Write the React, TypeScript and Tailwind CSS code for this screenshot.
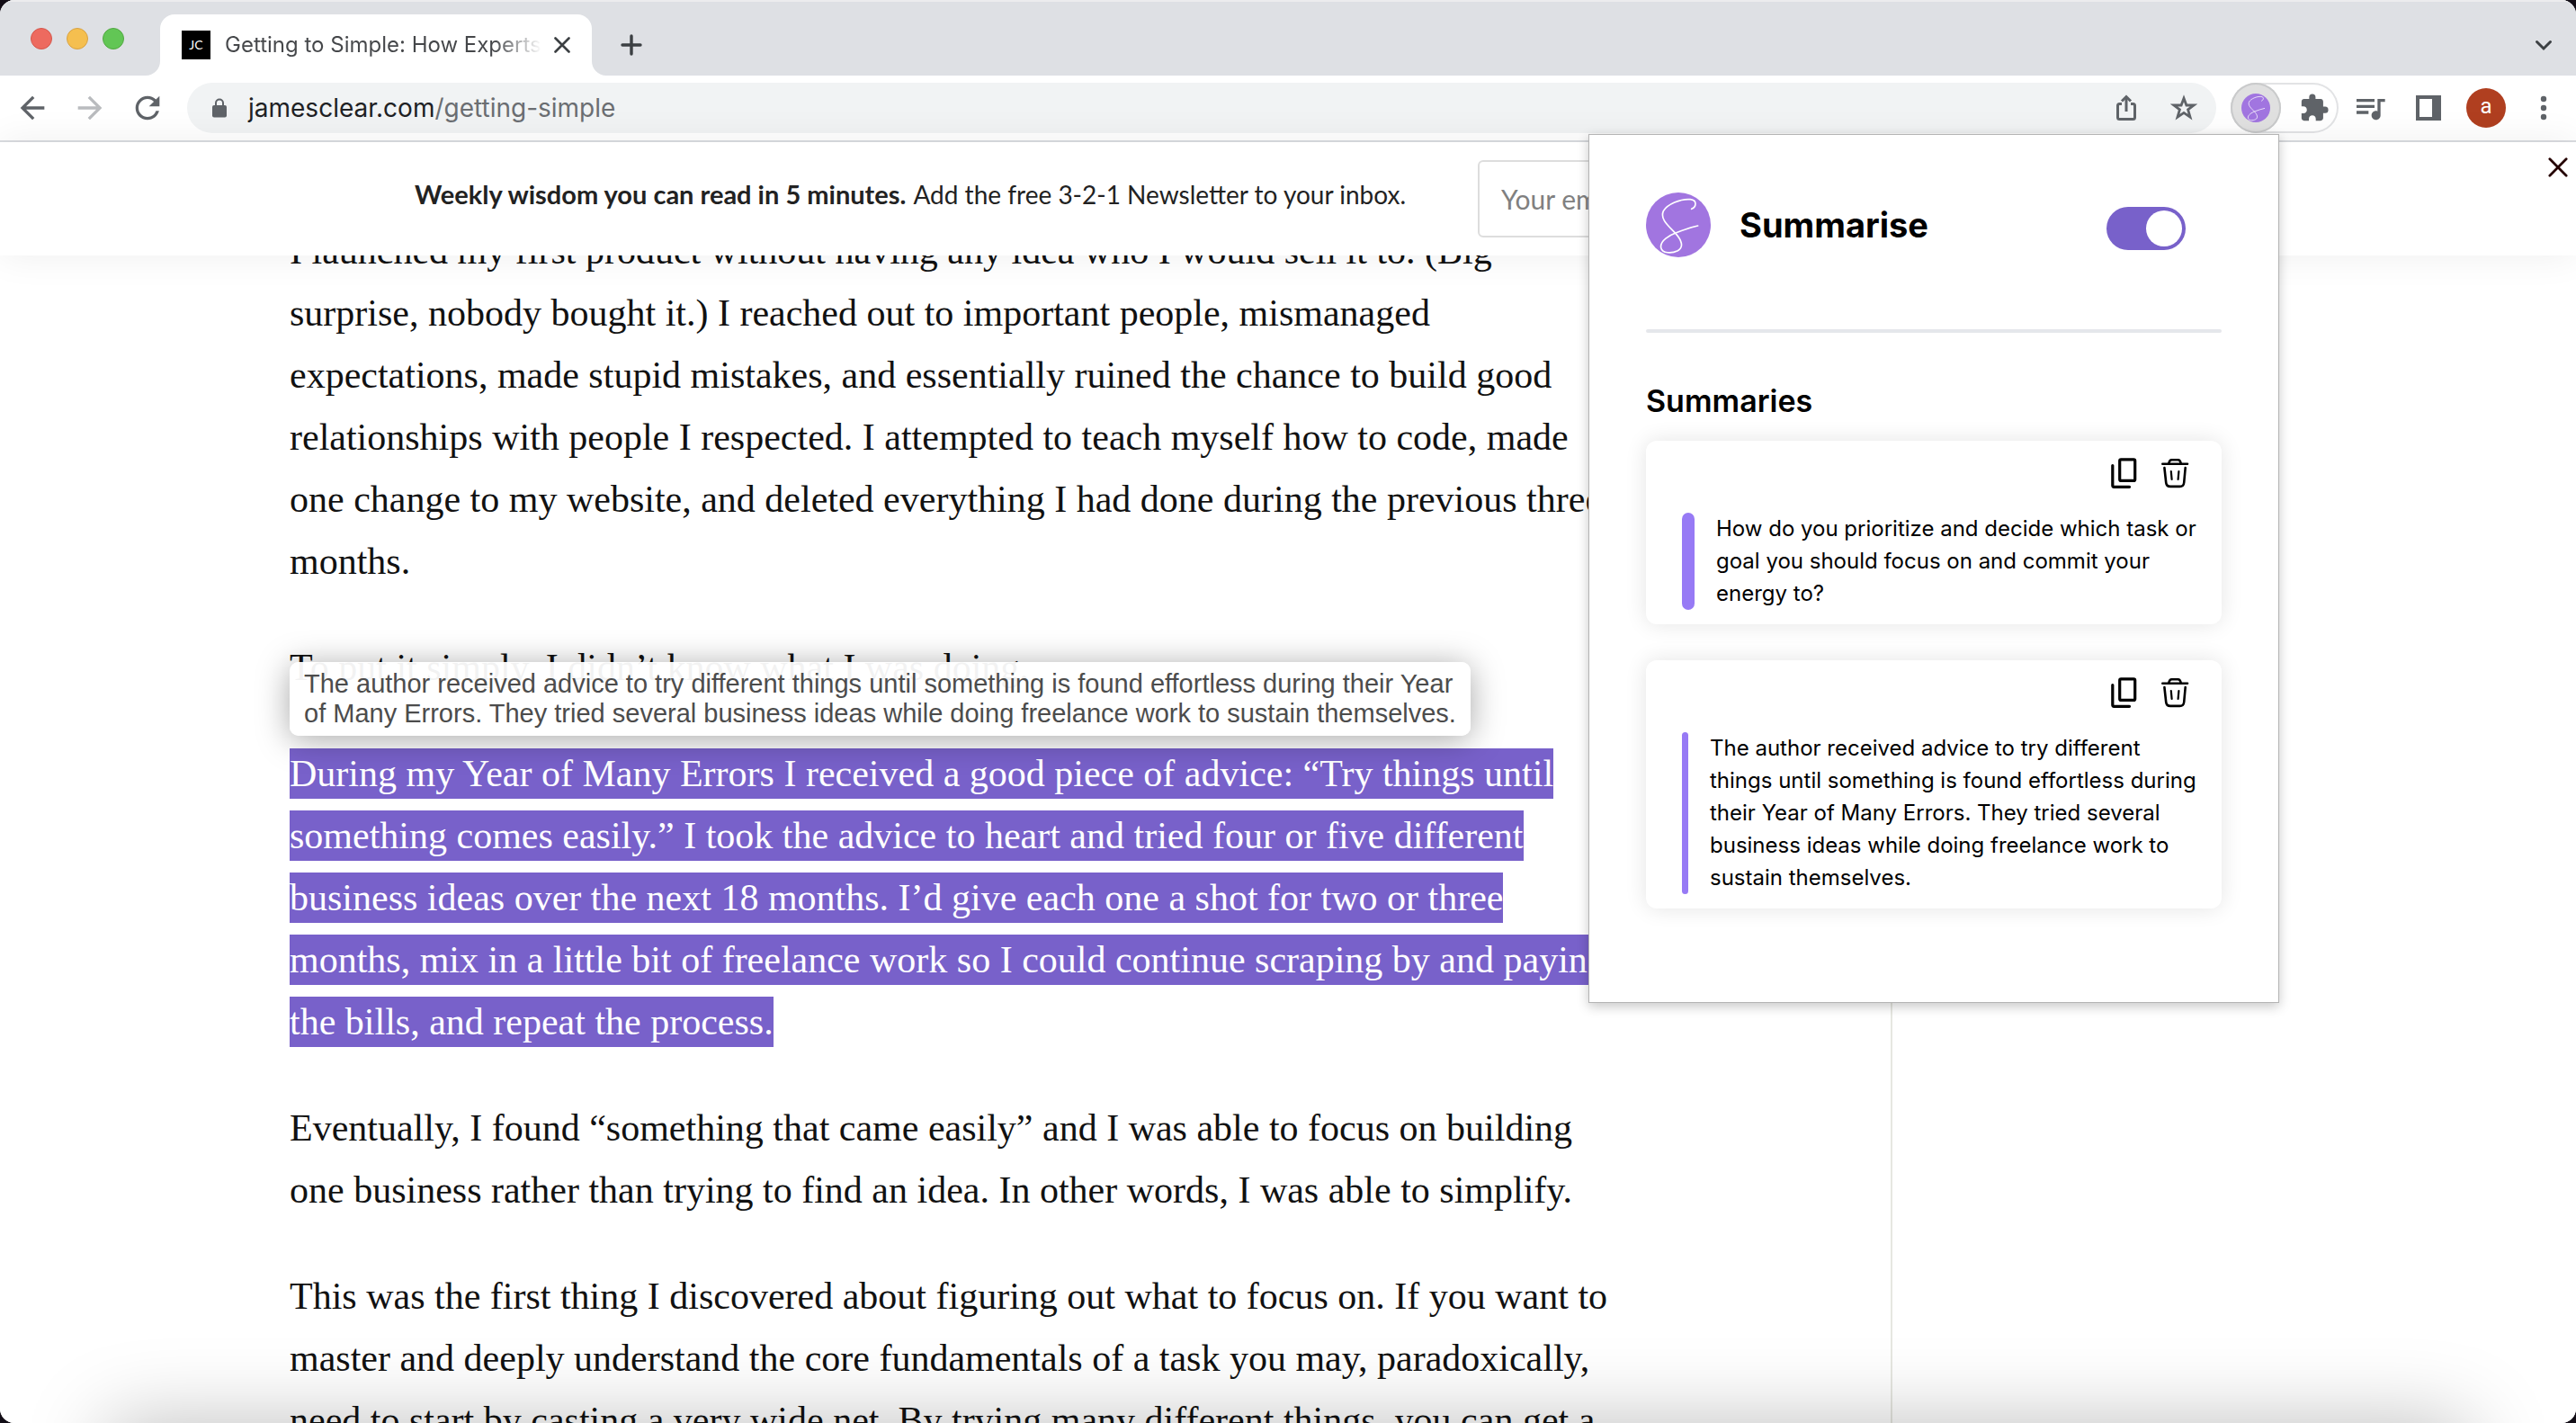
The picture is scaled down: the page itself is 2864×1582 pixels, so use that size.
import { useState, type ReactNode } from "react";
import {
  MdArrowBack,
  MdArrowForward,
  MdExtension,
  MdQueueMusic,
  MdRefresh,
} from "react-icons/md";

const HIGHLIGHTED = [
  "During my Year of Many Errors I received a good piece of advice: “Try things until",
  "something comes easily.” I took the advice to heart and tried four or five different",
  "business ideas over the next 18 months. I’d give each one a shot for two or three",
  "months, mix in a little bit of freelance work so I could continue scraping by and paying",
  "the bills, and repeat the process.",
];

const OPENING = [
  "I launched my first product without having any idea who I would sell it to. (Big",
  "surprise, nobody bought it.) I reached out to important people, mismanaged",
  "expectations, made stupid mistakes, and essentially ruined the chance to build good",
  "relationships with people I respected. I attempted to teach myself how to code, made",
  "one change to my website, and deleted everything I had done during the previous three",
  "months.",
];

const EVENTUALLY = [
  "Eventually, I found “something that came easily” and I was able to focus on building",
  "one business rather than trying to find an idea. In other words, I was able to simplify.",
];

const DISCOVERY = [
  "This was the first thing I discovered about figuring out what to focus on. If you want to",
  "master and deeply understand the core fundamentals of a task you may, paradoxically,",
  "need to start by casting a very wide net. By trying many different things, you can get a",
];

const SUMMARIES = [
  {
    text: "How do you prioritize and decide which task or goal you should focus on and commit your energy to?",
    bar: "w-[14px]",
  },
  {
    text: "The author received advice to try different things until something is found effortless during their Year of Many Errors. They tried several business ideas while doing freelance work to sustain themselves.",
    bar: "w-[7px]",
  },
];

function LogoMark({ className }: { className: string }) {
  return (
    <svg viewBox="0 0 216 216" className={className} aria-hidden="true">
      <circle cx="108" cy="108" r="108" fill="#a175e0" />
      <path
        d="M152 55C168 48 172 26 148 23C115 20 70 40 58 62C46 90 76 112 99 137C118 158 128 182 106 194C86 204 54 204 50 184C46 160 80 142 99 135C124 125 150 116 173 111"
        fill="none"
        stroke="#fff"
        strokeWidth="5"
        strokeLinecap="round"
      />
    </svg>
  );
}

function Cross({ className, width }: { className: string; width: number }) {
  return (
    <svg viewBox="0 0 24 24" className={className} fill="none" stroke="currentColor" strokeWidth={width} strokeLinecap="round" aria-hidden="true">
      <path d="M2 2L22 22M22 2L2 22" />
    </svg>
  );
}

function LockIcon() {
  return (
    <svg viewBox="0 0 24 24" className="size-6" aria-hidden="true">
      <rect x="4" y="9" width="16" height="13.500" rx="2" fill="currentColor" />
      <path d="M8 10V6.500A4 4 0 0 1 16 6.500V10" fill="none" stroke="currentColor" strokeWidth="2" />
    </svg>
  );
}

function ShareIcon() {
  return (
    <svg viewBox="0 0 30 30" className="size-[30px]" fill="none" stroke="#5f6368" strokeWidth="3" aria-hidden="true">
      <path d="M10 10.500H7.500Q5.500 10.500 5.500 12.500V25.500Q5.500 27.500 7.500 27.500H22.500Q24.500 27.500 24.500 25.500V12.500Q24.500 10.500 22.500 10.500H20" />
      <path d="M15 19V3" />
      <path d="M10 7.500L15 2.500L20 7.500" />
    </svg>
  );
}

function StarIcon() {
  return (
    <svg viewBox="0 0 30 30" className="size-[30px]" fill="none" stroke="#5f6368" strokeWidth="2.800" aria-hidden="true">
      <path d="M15 4.200L17.900 12H26L19.600 16.900L22 25.200L15 20.400L8 25.200L10.400 16.900L4 12H12.100Z" />
    </svg>
  );
}

function CopyIcon() {
  return (
    <svg viewBox="0 0 40 40" className="size-10" fill="none" stroke="#000" strokeWidth="3.200" strokeLinecap="round" strokeLinejoin="round" aria-hidden="true">
      <rect x="14.700" y="4.800" width="17" height="23.600" rx="1.500" />
      <path d="M6.800 11.500V33.800Q6.800 35.300 8.300 35.300H25.500" />
    </svg>
  );
}

function TrashIcon() {
  return (
    <svg viewBox="0 0 40 40" className="size-10" fill="none" stroke="#000" strokeWidth="2.600" strokeLinecap="round" strokeLinejoin="round" aria-hidden="true">
      <path d="M6.300 9.800H34" />
      <path d="M13.200 9.500Q14 5.200 16.500 5.200H23.500Q26 5.200 26.800 9.500" />
      <path d="M8.400 14L10.200 30.500Q10.700 34.900 15 34.900H25.500Q29.800 34.900 30.200 30.500L31.700 14" />
      <path d="M15.800 18L16.600 27M24.400 18L23.600 27" strokeWidth="2.200" />
    </svg>
  );
}

function Lines({ lines }: { lines: string[] }) {
  return (
    <>
      {lines.map((line) => (
        <span key={line} className="block">
          {line}
        </span>
      ))}
    </>
  );
}

function TabStrip() {
  return (
    <header className="flex h-[84px] shrink-0 items-end border-t-2 border-[#ececee] bg-[#dee0e4] pr-[26px] pl-[34px]">
      <div className="mb-[29px] flex gap-4">
        <button aria-label="Close window" className="size-6 rounded-full border border-[#d5574c] bg-[#ed6a5f]" />
        <button aria-label="Minimise window" className="size-6 rounded-full border border-[#d8a243] bg-[#f5bf4f]" />
        <button aria-label="Zoom window" className="size-6 rounded-full border border-[#52a842] bg-[#62c655]" />
      </div>
      <div className="relative ml-10 flex h-[68px] w-[480px] items-center rounded-t-2xl bg-white pl-6">
        <svg viewBox="0 0 16 16" className="absolute bottom-0 -left-4 size-4" fill="#fff" aria-hidden="true">
          <path d="M16 0V16H0A16 16 0 0 0 16 0Z" />
        </svg>
        <svg viewBox="0 0 16 16" className="absolute -right-4 bottom-0 size-4" fill="#fff" aria-hidden="true">
          <path d="M0 0V16H16A16 16 0 0 1 0 0Z" />
        </svg>
        <span className="flex size-8 items-center justify-center bg-black font-['Lato',sans-serif] text-sm text-white">JC</span>
        <span className="ml-4 w-[352px] overflow-hidden bg-linear-to-r from-[#45474a] from-85% to-transparent bg-clip-text text-2xl whitespace-nowrap text-transparent">
          Getting to Simple: How Experts
        </span>
        <button aria-label="Close tab" className="ml-[14px] text-[#3c4043]">
          <Cross className="size-[18px]" width={3.5} />
        </button>
      </div>
      <button aria-label="New tab" className="mb-[22px] ml-8 text-[#3c4043]">
        <svg viewBox="0 0 24 24" className="size-6" fill="none" stroke="currentColor" strokeWidth="3.400" strokeLinecap="round" aria-hidden="true">
          <path d="M12 2V22M2 12H22" />
        </svg>
      </button>
      <button aria-label="Search tabs" className="mb-6 ml-auto text-[#3c4043]">
        <svg viewBox="0 0 20 20" className="size-5" fill="none" stroke="currentColor" strokeWidth="3" strokeLinecap="round" aria-hidden="true">
          <path d="M2.500 6.500L10 14L17.500 6.500" />
        </svg>
      </button>
    </header>
  );
}

function Toolbar() {
  return (
    <nav className="flex h-[74px] shrink-0 items-center border-b-2 border-[#dadce0] bg-white pr-4 pl-4 text-[#5f6368]">
      <div className="flex gap-6 pr-6">
        <button aria-label="Back">
          <MdArrowBack className="size-10" />
        </button>
        <button aria-label="Forward" className="text-[#b9bbbe]">
          <MdArrowForward className="size-10" />
        </button>
        <button aria-label="Reload">
          <MdRefresh className="size-10" />
        </button>
      </div>
      <div className="flex h-14 flex-1 items-center rounded-full bg-[#f1f3f4] pr-[21px] pl-6">
        <LockIcon />
        <a href="#article" className="ml-5 text-[28px] text-[#6b6e72]">
          <span className="text-[#202124]">jamesclear.com</span>/getting-simple
        </a>
        <button aria-label="Share" className="mr-[34px] ml-auto">
          <ShareIcon />
        </button>
        <button aria-label="Bookmark">
          <StarIcon />
        </button>
      </div>
      <div className="ml-4 flex h-14 w-[120px] items-center rounded-full bg-white inset-ring-2 inset-ring-[#e2e3e5]">
        <button aria-label="Summarise extension" className="flex size-14 items-center justify-center rounded-full bg-[#e0e0e0] inset-ring-2 inset-ring-[#c9cacb]">
          <LogoMark className="size-8" />
        </button>
        <button aria-label="Extensions" className="ml-5">
          <MdExtension className="size-[34px]" />
        </button>
      </div>
      <button aria-label="Media" className="ml-[15px]">
        <MdQueueMusic className="size-10" />
      </button>
      <button aria-label="Side panel" className="ml-[31px]">
        <svg viewBox="0 0 28 28" className="size-7" aria-hidden="true">
          <path d="M0 0H28V28H0ZM4 4V24H18V4Z" fill="currentColor" fillRule="evenodd" />
        </svg>
      </button>
      <button aria-label="Profile" className="ml-7 flex size-11 items-center justify-center rounded-full bg-[#b03f20] pb-1 font-['Roboto',sans-serif] text-2xl text-white">
        a
      </button>
      <button aria-label="Menu" className="ml-[22px]">
        <svg viewBox="0 0 40 40" className="size-10" fill="currentColor" aria-hidden="true">
          <circle cx="20" cy="10" r="3.200" />
          <circle cx="20" cy="20" r="3.200" />
          <circle cx="20" cy="30" r="3.200" />
        </svg>
      </button>
    </nav>
  );
}

function NewsletterBanner() {
  return (
    <section className="relative z-10 flex h-[126px] shrink-0 items-center bg-white pl-[461px] font-['Lato',sans-serif] text-[28px] whitespace-nowrap text-[#222] shadow-[0_0_40px_rgba(0,0,0,0.07)]">
      <p className="shrink-0 basis-[1182px] pb-[10px]">
        <strong className="mr-2 text-[29px] font-bold">Weekly wisdom you can read in 5 minutes.</strong>
        Add the free 3-2-1 Newsletter to your inbox.
      </p>
      <input
        type="email"
        aria-label="Your email address"
        placeholder="Your email address"
        className="h-[86px] w-[520px] rounded-md border-2 border-[#ddd] bg-white px-6 text-[30px] placeholder:text-[#808080]"
      />
      <button aria-label="Dismiss banner" className="absolute top-[17px] right-[9px] text-[#250000]">
        <Cross className="size-[22px]" width={3} />
      </button>
    </section>
  );
}

function Article() {
  return (
    <main id="article" className="-mt-[39px] grid min-h-0 flex-1 grid-cols-[2104fr_760fr] bg-white">
      <article className="flex flex-col gap-[49px] border-r-2 border-[#e6e7e1] pl-[322px] font-['Liberation_Serif',serif] text-[42px] leading-[69px] whitespace-nowrap text-[#111]">
        <p>
          <Lines lines={OPENING} />
        </p>
        <p>To put it simply, I didn’t know what I was doing.</p>
        <div className="relative">
          <p className="text-white">
            {HIGHLIGHTED.map((line) => (
              <span key={line} className="block">
                <mark className="bg-[#7861ca] py-[5px] text-white">{line}</mark>
              </span>
            ))}
          </p>
          <div
            role="tooltip"
            className="absolute bottom-full left-0 mb-2 w-max rounded-[10px] bg-white/95 px-4 py-2 font-['Liberation_Sans',sans-serif] text-[29px] leading-[33px] text-[#4c4c4c] shadow-[0_4px_36px_rgba(0,0,0,0.35)]"
          >
            <Lines
              lines={[
                "The author received advice to try different things until something is found effortless during their Year",
                "of Many Errors. They tried several business ideas while doing freelance work to sustain themselves.",
              ]}
            />
          </div>
        </div>
        <p>
          <Lines lines={EVENTUALLY} />
        </p>
        <p>
          <Lines lines={DISCOVERY} />
        </p>
      </article>
    </main>
  );
}

function IconButton({ label, children }: { label: string; children: ReactNode }) {
  return (
    <button aria-label={label} className="size-10">
      {children}
    </button>
  );
}

function SummaryPopup() {
  const [enabled, setEnabled] = useState(true);
  return (
    <aside className="absolute top-[149px] right-[330px] z-20 w-[768px] border border-[#b4b4b4] bg-white px-[63px] pt-16 pb-[104px] text-black shadow-[0_4px_12px_rgba(0,0,0,0.22)]">
      <div className="flex items-center">
        <LogoMark className="size-[72px]" />
        <h1 className="ml-8 text-[38px] leading-[48px] font-bold">Summarise</h1>
        <label className="mt-2 mr-10 ml-auto flex h-12 w-[88px] cursor-pointer items-center rounded-full bg-[#7861ca] p-1 has-[:not(:checked)]:bg-gray-300">
          <input
            type="checkbox"
            role="switch"
            aria-label="Enable Summarise"
            checked={enabled}
            onChange={(e) => setEnabled(e.target.checked)}
            className="size-10 appearance-none rounded-full bg-white checked:ml-auto"
          />
        </label>
      </div>
      <hr className="mt-20 h-1 rounded-full border-0 bg-gray-200" />
      <h2 className="mt-14 mb-6 text-[34px] leading-[40px] font-semibold">Summaries</h2>
      <ul className="flex flex-col gap-10">
        {SUMMARIES.map(({ text, bar }) => (
          <li key={text} className="rounded-xl bg-white pr-6 pb-4 pl-10 shadow-[0_0_24px_rgba(0,0,0,0.11)]">
            <div className="mb-2 flex h-[72px] items-center justify-end gap-4 pr-2">
              <IconButton label="Copy summary">
                <CopyIcon />
              </IconButton>
              <IconButton label="Delete summary">
                <TrashIcon />
              </IconButton>
            </div>
            <div className="flex gap-6">
              <span className={`${bar} shrink-0 rounded-full bg-[#977af5]`} />
              <p className="text-2xl leading-9">{text}</p>
            </div>
          </li>
        ))}
      </ul>
    </aside>
  );
}

export default function App() {
  return (
    <div className="h-screen overflow-hidden bg-[#120d16] font-['Inter',sans-serif]">
      <div className="relative flex h-full flex-col overflow-hidden rounded-2xl bg-white">
        <TabStrip />
        <Toolbar />
        <NewsletterBanner />
        <Article />
        <SummaryPopup />
        <div className="pointer-events-none absolute inset-x-[120px] -bottom-40 h-40 shadow-[0_0_90px_rgba(0,0,0,0.26)]" />
      </div>
    </div>
  );
}
